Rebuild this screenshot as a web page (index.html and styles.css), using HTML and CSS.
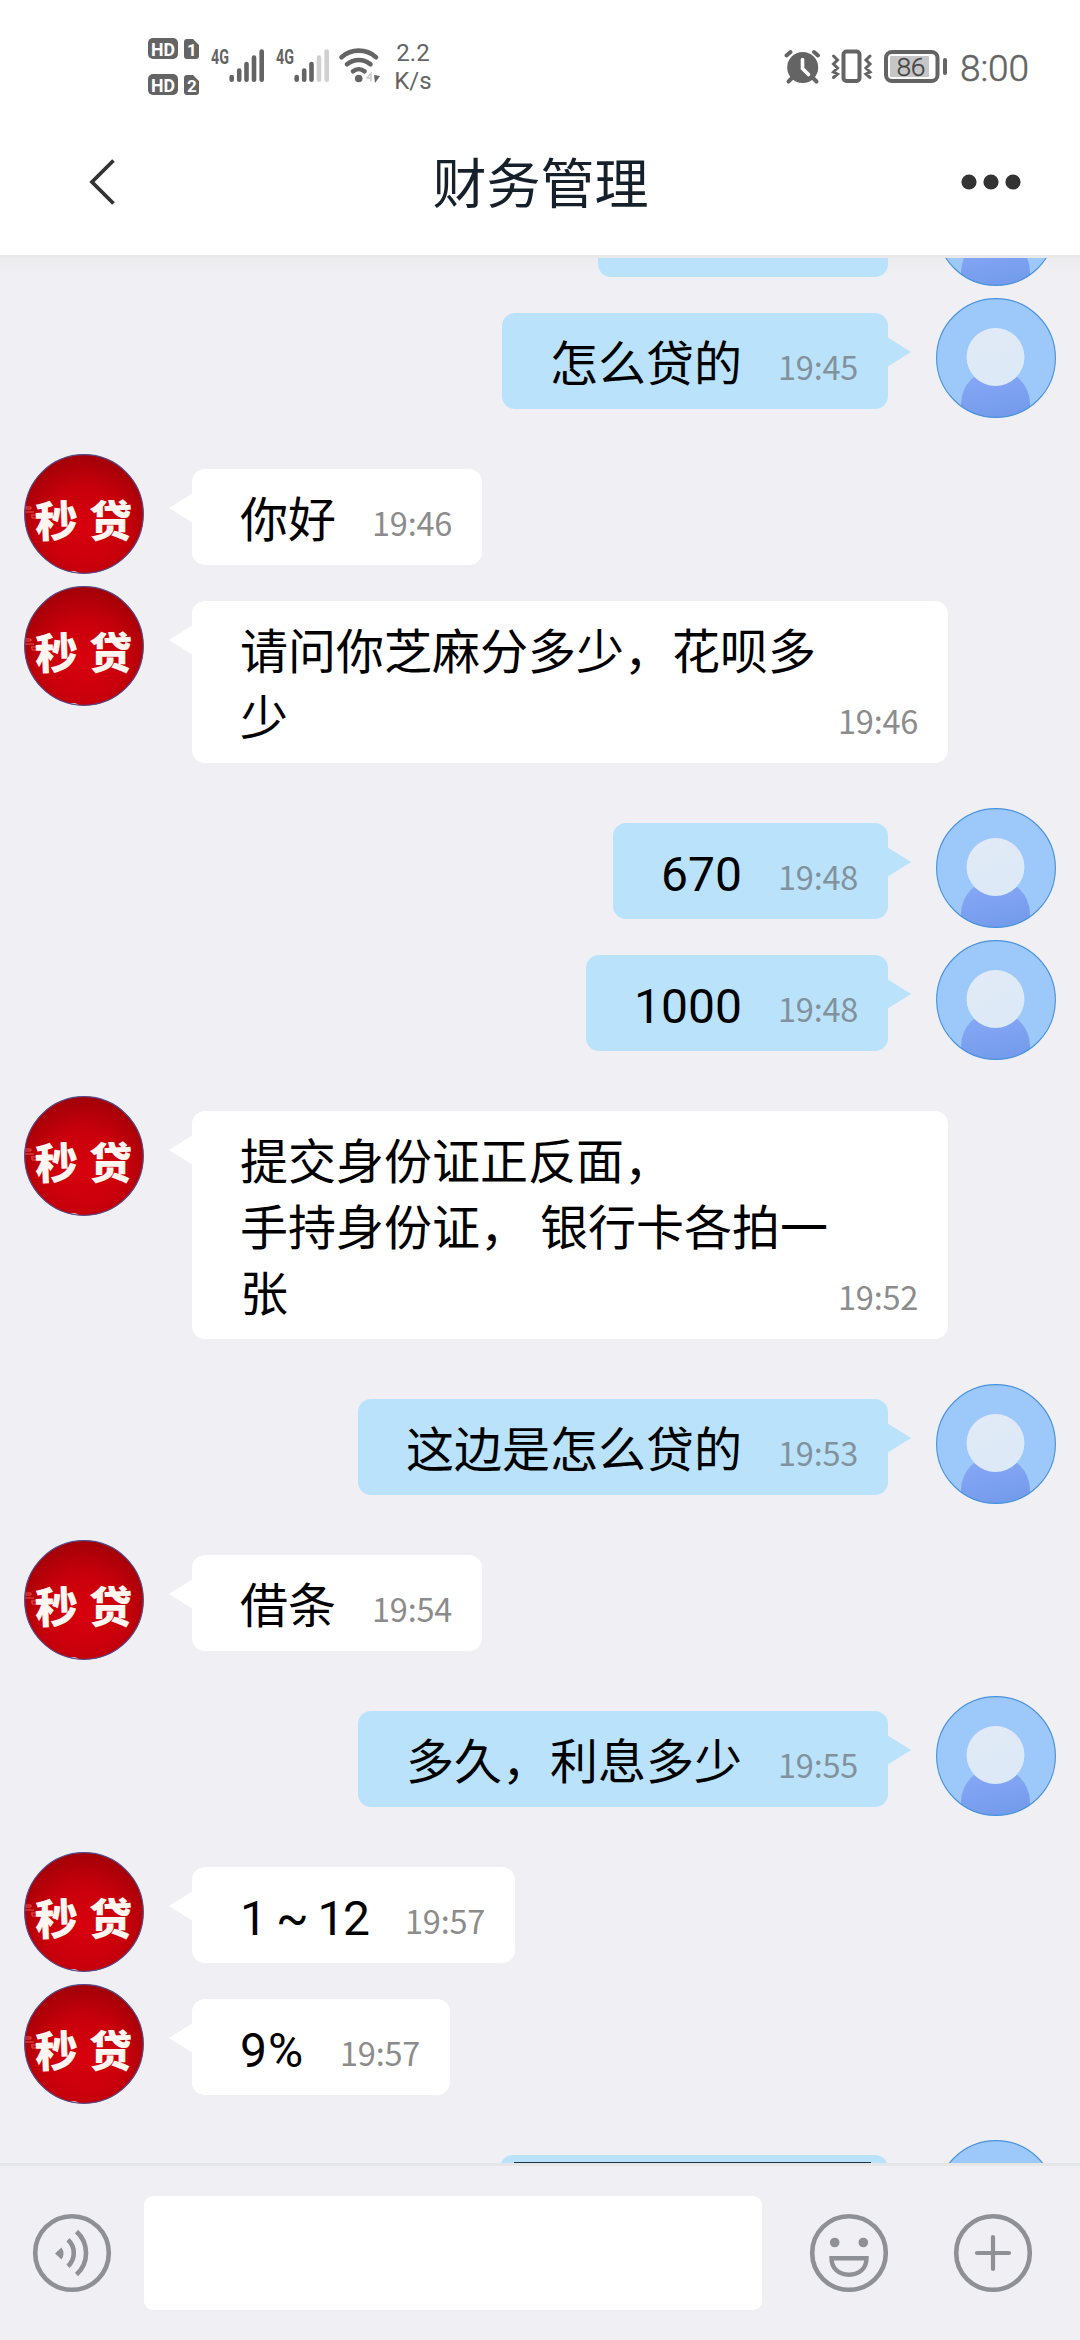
FILE: index.html
```html
<!DOCTYPE html>
<html lang="zh-CN">
<head>
<meta charset="utf-8">
<title>财务管理</title>
<link rel="stylesheet" href="styles.css">
</head>
<body>
<svg class="defs" aria-hidden="true">
  <defs>
    <linearGradient id="shoulder" x1="0" y1="0" x2="0.3" y2="1">
      <stop offset="0" stop-color="#8aa9f8"/><stop offset="1" stop-color="#759cec"/>
    </linearGradient>
    <linearGradient id="head" x1="0" y1="0" x2="0.4" y2="1">
      <stop offset="0" stop-color="#e2eaf6"/><stop offset="1" stop-color="#dce9f7"/>
    </linearGradient>
    <radialGradient id="red" cx="0.5" cy="0.62" r="0.68">
      <stop offset="0" stop-color="#d8000e"/><stop offset="0.5" stop-color="#c8000b"/><stop offset="1" stop-color="#980006"/>
    </radialGradient>
    <clipPath id="round"><circle cx="60" cy="60" r="59.5"/></clipPath>
  </defs>
  <symbol id="me" viewBox="0 0 120 120">
    <g clip-path="url(#round)">
      <rect width="120" height="120" fill="#9cc8fa"/>
      <path d="M25 120V106a34.5 34.5 0 0 1 69 0V120Z" fill="url(#shoulder)"/>
      <circle cx="59.5" cy="59" r="29" fill="url(#head)"/>
    </g>
    <circle cx="60" cy="60" r="59.4" fill="none" stroke="#4a92dd" stroke-width="1.1"/>
  </symbol>
  <symbol id="loan" viewBox="0 0 120 120">
    <g clip-path="url(#round)">
      <rect width="120" height="120" fill="url(#red)"/>
      <path d="M1 53h6v2h-6M1 58h9M7 61h5M8 61v3h4" fill="none" stroke="#e8524a" stroke-width="1"/>
      <ellipse cx="49" cy="120" rx="6" ry="3" fill="#f6d8cc"/>
      <ellipse cx="72" cy="120.500" rx="5" ry="2.500" fill="#e9a79c"/>
    </g>
    <circle cx="60" cy="60" r="59.300" fill="none" stroke="#554a86" stroke-width="1.200"/>
  </symbol>
</svg>

<header class="top">
  <div class="status">
    <svg class="hd" width="52" height="58" viewBox="148 38 52 58">
      <rect x="148" y="38" width="30" height="21" rx="5"/><rect x="148" y="74" width="30" height="21" rx="5"/>
      <path d="M187 39h6l6 6v11a3 3 0 0 1-3 3h-9a3 3 0 0 1-3-3V42a3 3 0 0 1 3-3ZM187 75h6l6 6v11a3 3 0 0 1-3 3h-9a3 3 0 0 1-3-3V78a3 3 0 0 1 3-3Z"/>
      <text x="151" y="55.500" textLength="24" lengthAdjust="spacingAndGlyphs">HD</text><text x="151" y="91.500" textLength="24" lengthAdjust="spacingAndGlyphs">HD</text>
      <text x="187" y="56" class="sim">1</text><text x="187" y="92" class="sim">2</text>
    </svg>
    <svg class="signal" width="55" height="36" viewBox="210 48 55 36">
      <text x="211" y="64" textLength="18" lengthAdjust="spacingAndGlyphs">4G</text>
      <path d="M231.700 77v2.700M239.200 70.500v9.200M246.500 64v15.700M254 57.500v22.200M261.700 51.500v28.200"/>
    </svg>
    <svg class="signal second" width="55" height="36" viewBox="210 48 55 36">
      <text x="211" y="64" textLength="18" lengthAdjust="spacingAndGlyphs">4G</text>
      <path d="M231.700 77v2.700M239.200 70.500v9.200M246.500 64v15.700"/><path class="off" d="M254 57.500v22.200M261.700 51.500v28.200"/>
    </svg>
    <svg class="wifi" width="42" height="36" viewBox="338 48 42 36">
      <path d="M341.500 57.200a26 26 0 0 1 34.500 0M347 64.300a18 18 0 0 1 23.500 0M353 71.300a9 9 0 0 1 11.500 0"/>
      <circle cx="358.700" cy="78.500" r="3.800"/>
      <path class="up" d="M367 78l4-4.500v7.500M367 78h4"/><path class="down" d="M374 75l6 1-5 7Z"/>
    </svg>
    <div class="rate"><span>2.2</span><span>K/s</span></div>
    <svg class="alarm" width="38" height="36" viewBox="783 48 38 36">
      <circle cx="801.700" cy="67.500" r="15.500"/>
      <path d="M785.500 55.500l4-3.500M817 55.500l-4-3.500M791 78l-3.500 3.500M812 78l3.500 3.500"/>
      <path class="hands" d="M801.500 59.500v9l6 6"/>
    </svg>
    <svg class="vibrate" width="42" height="36" viewBox="830 48 42 36">
      <rect x="842.500" y="51.500" width="16" height="29.500" rx="3"/>
      <path d="M832.500 56l4 4-4 4 4 4-4 4 4 2-4 3.500M869 56l-4 4 4 4-4 4 4 4-4 2 4 3.500"/>
    </svg>
    <svg class="battery" width="64" height="36" viewBox="882 48 64 36">
      <rect class="shell" x="885" y="52" width="51.500" height="29" rx="6"/>
      <rect class="charge" x="889" y="56" width="39" height="21" rx="1"/>
      <rect class="nub" x="942" y="58" width="4" height="17" rx="2"/>
      <text x="895.500" y="76" textLength="29">86</text>
    </svg>
    <div class="clock">8:00</div>
  </div>
  <nav class="nav">
    <svg class="back" width="30" height="50" viewBox="0 0 30 50"><path d="M26.500 3.500L5 25L26.500 46.500"/></svg>
    <h1>财务管理</h1>
    <svg class="more" width="62" height="18" viewBox="0 0 62 18"><circle cx="9" cy="9" r="7.600"/><circle cx="31" cy="9" r="7.600"/><circle cx="53" cy="9" r="7.600"/></svg>
  </nav>
</header>

<main class="chat">
  <div class="row out first"><div class="bubble partial"></div><svg class="avatar"><use href="#me"/></svg></div>
  <div class="row out follow"><div class="bubble"><p>怎么贷的</p><time>19:45</time></div><svg class="avatar"><use href="#me"/></svg></div>
  <div class="row in"><svg class="avatar" viewBox="0 0 120 120"><use href="#loan"/><text x="11" y="83" transform="rotate(-2 32 70)">秒</text><text x="65" y="83">贷</text></svg><div class="bubble"><p>你好</p><time>19:46</time></div></div>
  <div class="row in follow"><svg class="avatar" viewBox="0 0 120 120"><use href="#loan"/><text x="11" y="83" transform="rotate(-2 32 70)">秒</text><text x="65" y="83">贷</text></svg><div class="bubble wide"><p>请问你芝麻分多少，花呗多<br>少</p><time>19:46</time></div></div>
  <div class="row out"><div class="bubble"><p>670</p><time>19:48</time></div><svg class="avatar"><use href="#me"/></svg></div>
  <div class="row out follow"><div class="bubble"><p>1000</p><time>19:48</time></div><svg class="avatar"><use href="#me"/></svg></div>
  <div class="row in"><svg class="avatar" viewBox="0 0 120 120"><use href="#loan"/><text x="11" y="83" transform="rotate(-2 32 70)">秒</text><text x="65" y="83">贷</text></svg><div class="bubble wide"><p>提交身份证正反面，<br>手持身份证， 银行卡各拍一<br>张</p><time>19:52</time></div></div>
  <div class="row out"><div class="bubble"><p>这边是怎么贷的</p><time>19:53</time></div><svg class="avatar"><use href="#me"/></svg></div>
  <div class="row in"><svg class="avatar" viewBox="0 0 120 120"><use href="#loan"/><text x="11" y="83" transform="rotate(-2 32 70)">秒</text><text x="65" y="83">贷</text></svg><div class="bubble"><p>借条</p><time>19:54</time></div></div>
  <div class="row out"><div class="bubble"><p>多久，利息多少</p><time>19:55</time></div><svg class="avatar"><use href="#me"/></svg></div>
  <div class="row in"><svg class="avatar" viewBox="0 0 120 120"><use href="#loan"/><text x="11" y="83" transform="rotate(-2 32 70)">秒</text><text x="65" y="83">贷</text></svg><div class="bubble"><p class="range">1 ~ 12</p><time>19:57</time></div></div>
  <div class="row in follow"><svg class="avatar" viewBox="0 0 120 120"><use href="#loan"/><text x="11" y="83" transform="rotate(-2 32 70)">秒</text><text x="65" y="83">贷</text></svg><div class="bubble"><p class="percent">9%</p><time>19:57</time></div></div>
  <div class="row out"><div class="bubble photo"><div class="picture"></div></div><svg class="avatar"><use href="#me"/></svg></div>
</main>

<footer class="composer">
  <svg class="tool" viewBox="0 0 80 80"><circle cx="40" cy="40" r="36.800"/><path d="M36 26.800a18 18 0 0 1 0 26.400M44.500 18.500a29 29 0 0 1 0 43"/><path class="solid" d="M23 40.500l6.500-6q4 6 0 12Z"/></svg>
  <div class="field"></div>
  <svg class="tool" viewBox="0 0 80 80"><circle cx="40" cy="40" r="36.800"/><circle class="solid" cx="25.700" cy="29.500" r="4.800"/><circle class="solid" cx="54.300" cy="29.500" r="4.800"/><path class="mouth" d="M22.500 45.200h35c0 10-7 16.500-17.500 16.500s-17.500-6.500-17.500-16.500Z"/></svg>
  <svg class="tool" viewBox="0 0 80 80"><circle cx="40" cy="40" r="36.800"/><path class="plus" d="M24 40h32M40 24v32"/></svg>
</footer>
</body>
</html>
```
FILE: styles.css
```css
* { box-sizing: border-box; margin: 0; padding: 0; }

body {
  width: 1080px;
  height: 2340px;
  overflow: hidden;
  display: flex;
  flex-direction: column;
  background: #efeff4;
  font-family: Roboto, "Noto Sans CJK SC", sans-serif;
}

svg { display: block; flex: none; }
.defs { position: absolute; width: 0; height: 0; }

/* status bar and title */
.top {
  height: 255px;
  flex: none;
  background: #fff;
}
.status {
  height: 133px;
  display: flex;
  align-items: flex-start;
  padding: 38px 0 0 148px;
  fill: #646464;
  color: #646464;
}
.status svg { margin-top: 10px; overflow: visible; }
.status .hd { margin-top: 0; }
.hd text { fill: #fff; font: 700 19px Roboto, sans-serif; }
.hd .sim { font-size: 17px; }
.signal { margin-left: 10px; }
.signal.second { margin-left: 10px; }
.signal text { font: 700 21px Roboto, sans-serif; }
.signal path { stroke: #646464; stroke-width: 4.6; stroke-linecap: round; }
.signal .off { stroke: #d0d0d0; }
.wifi { margin-left: 8px; }
.wifi path { fill: none; stroke: #646464; stroke-width: 4.6; stroke-linecap: round; }
.wifi .up { stroke: #ccc; stroke-width: 1.6; }
.wifi .down { fill: #646464; stroke: none; }
.rate {
  width: 40px;
  margin-left: 13px;
  padding-top: 1px;
  display: flex;
  flex-direction: column;
  align-items: center;
  font-size: 24px;
  line-height: 28px;
}
.alarm { margin-left: 351px; }
.alarm path { fill: none; stroke: #646464; stroke-width: 4; stroke-linecap: round; }
.alarm .hands { stroke: #fff; stroke-width: 3.6; }
.vibrate { margin-left: 9px; fill: none; stroke: #646464; stroke-width: 4; }
.vibrate path { stroke-width: 3; stroke-linecap: round; }
.battery { margin-left: 10px; }
.battery .shell { fill: none; stroke: #646464; stroke-width: 4; }
.battery .charge { fill: #c6c6c6; }
.battery text { font: 300 26.5px Roboto, sans-serif; fill: #444; stroke: #444; stroke-width: .3; }
.clock {
  margin: 11px 0 0 13px;
  font-size: 37px;
  font-weight: 300;
  line-height: 40px;
  letter-spacing: -0.1px;
  -webkit-text-stroke: .5px #646464;
}
.nav {
  height: 97px;
  display: flex;
  align-items: center;
  justify-content: space-between;
  padding: 0 58px 0 87px;
}
.back { fill: none; stroke: #333; stroke-width: 3.8; }
.nav h1 {
  margin-left: 4px;
  margin-top: 8px;
  font-size: 54px;
  font-weight: 400;
  line-height: 80px;
  color: #15202a;
}
.more { fill: #333; }

/* conversation */
.chat {
  flex: 1;
  min-height: 0;
  overflow: hidden;
  border-top: 3px solid #e9e9ec;
  background: linear-gradient(#ededf0, #efeff4 16px);
}
.row { display: flex; align-items: flex-start; padding: 0 24px; margin-top: 45px; }
.row.follow { margin-top: 21px; }
.row.first { margin-top: -92px; }
.row.out { justify-content: flex-end; }
.avatar { width: 120px; height: 120px; margin-bottom: -9px; }
.avatar text {
  font: 900 43px "Noto Sans CJK SC", sans-serif;
  fill: #fff6ef;
}
.bubble {
  position: relative;
  display: flex;
  justify-content: space-between;
  align-items: flex-end;
  margin-top: 15px;
  padding: 19px 30px 11px 48px;
  border-radius: 13px;
  background: #fff;
}
.bubble::after {
  content: "";
  position: absolute;
  top: 24px;
  width: 24px;
  height: 30px;
}
.in .bubble { margin-left: 48px; }
.in .bubble::after { left: -23px; background: #fff; clip-path: polygon(100% 0, 0 50%, 100% 100%); }
.out .bubble { margin-right: 48px; background: #bae3fb; }
.out .bubble::after { right: -23px; background: #bae3fb; clip-path: polygon(0 0, 100% 50%, 0 100%); }
.bubble p { font-size: 48px; line-height: 66px; min-height: 66px; color: #000; white-space: nowrap; }
.bubble time {
  width: 80px;
  flex: none;
  margin: 0 0 8px 36px;
  font: 400 32.5px/48px "Noto Sans CJK SC", sans-serif;
  letter-spacing: -0.2px;
  white-space: nowrap;
  color: #8c8c8c;
}
.out .bubble time { color: #82929c; }
.bubble.wide { width: 756px; }
.wide time { margin-left: 0; }
.bubble .range { width: 129px; letter-spacing: -1.5px; }
.bubble .percent { width: 64px; letter-spacing: 1px; }
.bubble.partial { width: 290px; height: 96px; }
.bubble.photo { width: 388px; height: 300px; padding: 7px 17px 0 14px; align-items: flex-start; }
.picture { width: 357px; height: 260px; border-top: 1px solid #234; background: #fff; }

/* input bar */
.composer {
  height: 177px;
  flex: none;
  display: flex;
  align-items: center;
  border-top: 3px solid #e5e6e8;
  background: #efeff4;
  padding: 0 47px 0 32px;
}
.tool { width: 80px; height: 80px; fill: none; stroke: #8f9095; stroke-width: 4.6; }
.tool .solid { fill: #8f9095; stroke: none; }
.tool .mouth { stroke-width: 4.4; }
.tool .plus { stroke-linecap: round; stroke-width: 4.2; }
.field { width: 618px; height: 114px; margin: 0 47px 0 32px; border-radius: 9px; background: #fff; }
.field + .tool { margin-right: 64px; }
```
